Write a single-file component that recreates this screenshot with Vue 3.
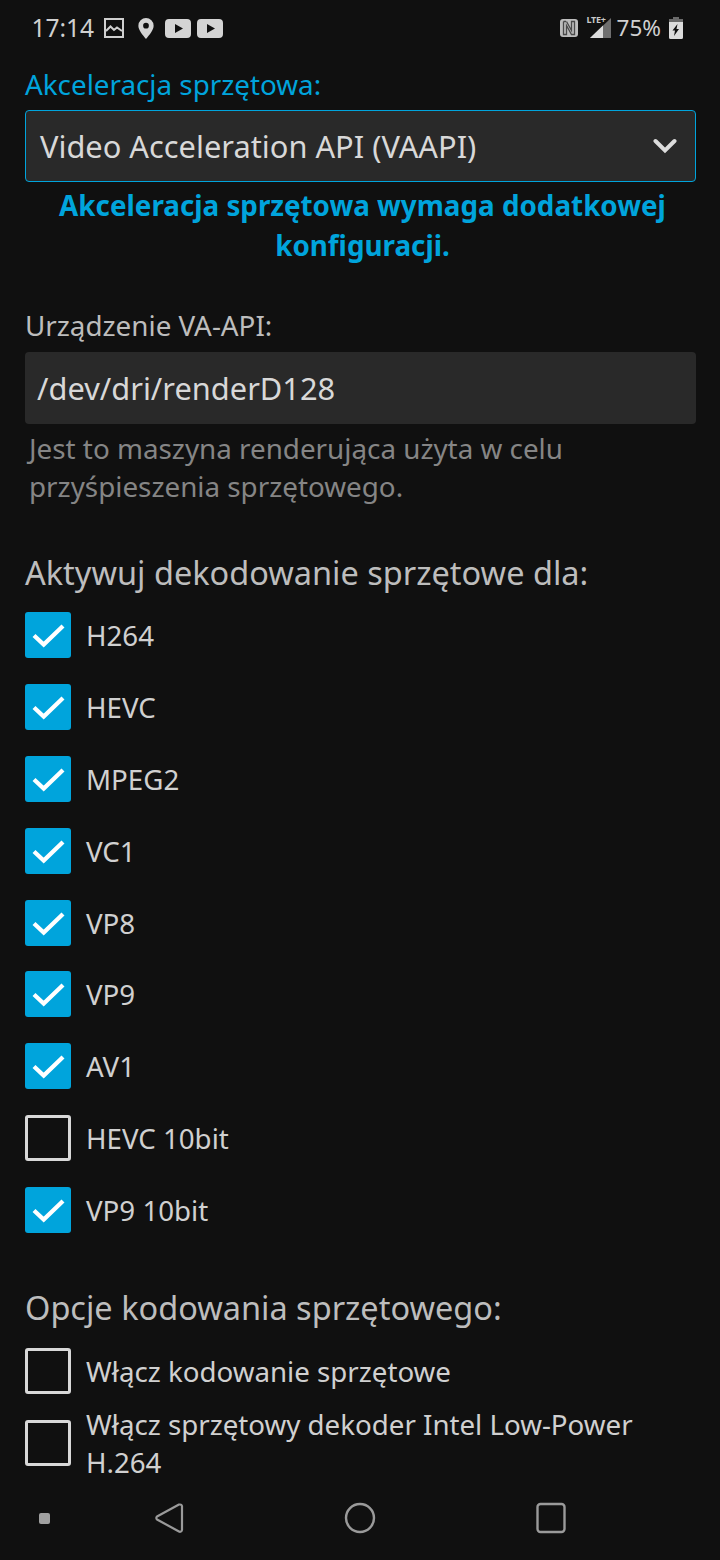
<template>
  <div class="screen">
    <header class="status">
      <div class="status-side">
        <span class="time">17:14</span>
        <svg class="ic-pic" width="20" height="20" viewBox="0 0 20 20" fill="none">
          <rect x="1" y="1" width="18" height="18" stroke="#cfcfcf" stroke-width="2" />
          <path d="M2 13 L6.5 8.5 L10 12 L13 9.5 L18 13" stroke="#cfcfcf" stroke-width="2" />
        </svg>
        <svg class="ic-pin" width="16" height="21" viewBox="0 0 16 22">
          <path fill="#d4d4d4" fill-rule="evenodd" d="M8 0a8 8 0 0 1 8 8c0 4.500-4.500 9.500-8 14C4.500 17.500 0 12.500 0 8a8 8 0 0 1 8-8zm0 5a3 3 0 1 0 0 6 3 3 0 0 0 0-6z" />
        </svg>
        <svg class="ic-yt" width="26" height="19" viewBox="0 0 26 19">
          <path fill="#d4d4d4" fill-rule="evenodd" d="M4 0h18a4 4 0 0 1 4 4v11a4 4 0 0 1-4 4H4a4 4 0 0 1-4-4V4a4 4 0 0 1 4-4zm6 5v9l8-4.500z" />
        </svg>
        <svg class="ic-yt2" width="26" height="19" viewBox="0 0 26 19">
          <path fill="#d4d4d4" fill-rule="evenodd" d="M4 0h18a4 4 0 0 1 4 4v11a4 4 0 0 1-4 4H4a4 4 0 0 1-4-4V4a4 4 0 0 1 4-4zm6 5v9l8-4.500z" />
        </svg>
      </div>
      <div class="status-side">
        <svg class="ic-nfc" width="18" height="18" viewBox="0 0 18 18" fill="none">
          <rect width="18" height="18" rx="3" fill="#bdbdbd" />
          <path d="M3.500 2.500h2.500M3.500 2.500V15.500H6.500V6.500L11.500 15.500H14.500V2.500H11.500V11.500L6.500 2.500" stroke="#4a4a4a" stroke-width="1.300" />
        </svg>
        <div class="signal">
          <span class="lte">LTE+</span>
          <svg width="21" height="20" viewBox="0 0 21 20">
            <path fill="#6f6f6f" d="M21 0v20H0z" />
            <path fill="#dcdcdc" d="M13 7.600V20H0z" />
          </svg>
        </div>
        <span class="pct">75%</span>
        <svg class="ic-bat" width="14" height="22" viewBox="0 0 14 22">
          <path fill="#6a6a6a" d="M4 0h6v2h4v5H0V2h4z" />
          <path fill="#dcdcdc" fill-rule="evenodd" d="M0 5h14v15.500a1.500 1.500 0 0 1-1.500 1.500h-11A1.500 1.500 0 0 1 0 20.500zm8.500 2L3.500 13.500H6L5 19l5-7H7.500z" />
        </svg>
      </div>
    </header>

    <main class="content">
      <label class="sel-label">Akceleracja sprzętowa:</label>
      <div class="select">
        <span>Video Acceleration API (VAAPI)</span>
        <svg class="chev" width="24" height="16" viewBox="0 0 24 16" fill="none">
          <path d="M2.500 3 L12 12.500 L21.500 3" stroke="#dcdcdc" stroke-width="4" stroke-linecap="round" />
        </svg>
      </div>
      <p class="warn">Akceleracja sprzętowa wymaga dodatkowej konfiguracji.</p>

      <label class="inp-label">Urządzenie VA-API:</label>
      <div class="input">/dev/dri/renderD128</div>
      <p class="help">Jest to maszyna renderująca użyta w celu przyśpieszenia sprzętowego.</p>

      <h3 class="head-dec">Aktywuj dekodowanie sprzętowe dla:</h3>
      <div class="check-list">
        <div v-for="c in codecs" :key="c.name" class="check-row">
          <span class="box" :class="{ on: c.on }">
            <svg v-if="c.on" width="34" height="28" viewBox="0 0 34 28" fill="none">
              <path d="M3 14.500 L12.700 23.500 L32 5" stroke="#fff" stroke-width="4.300" />
            </svg>
          </span>
          <span class="check-text">{{ c.name }}</span>
        </div>
      </div>

      <h3 class="head-enc">Opcje kodowania sprzętowego:</h3>
      <div class="check-row enc-first">
        <span class="box"></span>
        <span class="check-text">Włącz kodowanie sprzętowe</span>
      </div>
      <div class="check-row multi">
        <span class="box"></span>
        <span class="check-text">Włącz sprzętowy dekoder Intel Low-Power H.264</span>
      </div>
    </main>

    <nav class="navbar">
      <span class="nav-dot"></span>
      <svg class="nav-back" width="30" height="32" viewBox="0 0 30 32" fill="none">
        <path d="M26 2.500 a2 2 0 0 1 2 1.500 V28 a2 2 0 0 1-3 1.500 L3 17.500 a2 2 0 0 1 0-3 L25 2.500z" stroke="#9a9a9a" stroke-width="2.200" stroke-linejoin="round" />
      </svg>
      <svg class="nav-home" width="32" height="32" viewBox="0 0 32 32" fill="none">
        <circle cx="16" cy="16" r="14" stroke="#9a9a9a" stroke-width="2.400" />
      </svg>
      <svg class="nav-rec" width="30" height="32" viewBox="0 0 30 32" fill="none">
        <rect x="1.500" y="2" width="27" height="28" rx="3" stroke="#9a9a9a" stroke-width="2.400" />
      </svg>
    </nav>
  </div>
</template>

<script setup>
const codecs = [
  { name: 'H264', on: true },
  { name: 'HEVC', on: true },
  { name: 'MPEG2', on: true },
  { name: 'VC1', on: true },
  { name: 'VP8', on: true },
  { name: 'VP9', on: true },
  { name: 'AV1', on: true },
  { name: 'HEVC 10bit', on: false },
  { name: 'VP9 10bit', on: true }
]
</script>

<style>
html, body { margin: 0; background: #101010; }
</style>

<style scoped>
.screen {
  position: relative;
  width: 720px;
  height: 1560px;
  overflow: hidden;
  background: #101010;
  color: #d4d4d4;
  font-family: "Noto Sans", sans-serif;
}
.status {
  height: 56px;
  box-sizing: border-box;
  padding: 0 37px 0 31.500px;
  display: flex;
  justify-content: space-between;
  align-items: center;
}
.status-side { display: flex; align-items: center; }
.time { font-size: 24.500px; color: #d0d0d0; line-height: 56px; }
.ic-pic { margin-left: 10px; }
.ic-pin { margin-left: 14px; }
.ic-yt { margin-left: 11px; }
.ic-yt2 { margin-left: 6px; }
.signal { position: relative; margin-left: 12px; width: 21px; height: 20px; }
.lte {
  position: absolute;
  left: -3px;
  top: -3px;
  font-size: 9px;
  font-weight: 700;
  letter-spacing: -0.300px;
  line-height: 10px;
  color: #c8c8c8;
}
.signal svg { display: block; }
.pct { font-size: 22.500px; color: #d0d0d0; margin-left: 6px; line-height: 56px; }
.ic-bat { margin-left: 8px; }

.content { padding: 10px 24px 0 25px; }
.sel-label { display: block; font-size: 27.800px; line-height: 36px; color: #00a4dc; }
.select {
  margin-top: 8px;
  height: 72px;
  box-sizing: border-box;
  border: 1px solid #00a4dc;
  border-radius: 4px;
  background: #292929;
  padding: 0 18px 0 14px;
  display: flex;
  align-items: center;
  justify-content: space-between;
  font-size: 30.800px;
  color: #d8d8d8;
}
.warn {
  margin: 2.500px 0 0;
  font-size: 27.800px;
  line-height: 40px;
  font-weight: 700;
  text-align: center;
  color: #00a4dc;
  padding: 0 16px 0 20px;
}
.inp-label { display: block; margin-top: 42.500px; font-size: 27.800px; line-height: 36px; color: #bdbdbd; }
.input {
  margin-top: 9px;
  height: 72px;
  box-sizing: border-box;
  border-radius: 4px;
  background: #292929;
  padding: 0 12px;
  display: flex;
  align-items: center;
  font-size: 30.800px;
  color: #d8d8d8;
}
.help {
  margin: 5px 0 0;
  padding-left: 4px;
  font-size: 27.800px;
  line-height: 38px;
  color: #858585;
}
.head-dec, .head-enc {
  margin: 0;
  font-weight: 400;
  font-size: 32.500px;
  line-height: 44px;
  color: #bdbdbd;
}
.head-dec { margin-top: 46px; }
.head-enc { margin-top: 26.500px; }
.check-list { margin-top: 17px; }
.check-row {
  display: flex;
  align-items: center;
  gap: 15px;
  height: 71.900px;
  font-size: 27.700px;
  color: #d0d0d0;
  box-sizing: border-box;
  padding-bottom: 25.900px;
}
.enc-first { margin-top: 18px; height: 46px; padding: 0; }
.multi { margin-top: 26px; height: 46px; padding: 0; width: 620px; line-height: 38px; }
.box {
  flex: none;
  width: 46px;
  height: 46px;
  box-sizing: border-box;
  border: 3px solid #d8d8d8;
  border-radius: 3px;
  display: flex;
  align-items: center;
  justify-content: center;
}
.box.on { background: #00a4dc; border: none; }
.navbar {
  position: absolute;
  left: 0;
  right: 0;
  bottom: 0;
  height: 80px;
  background: #101010;
  display: flex;
  align-items: center;
  padding: 0 0 4px 39px;
  box-sizing: border-box;
}
.nav-dot { width: 11px; height: 11px; border-radius: 2px; background: #a0a0a0; }
.nav-back { margin-left: 104px; }
.nav-home { margin-left: 160px; }
.nav-rec { margin-left: 160px; }
</style>
